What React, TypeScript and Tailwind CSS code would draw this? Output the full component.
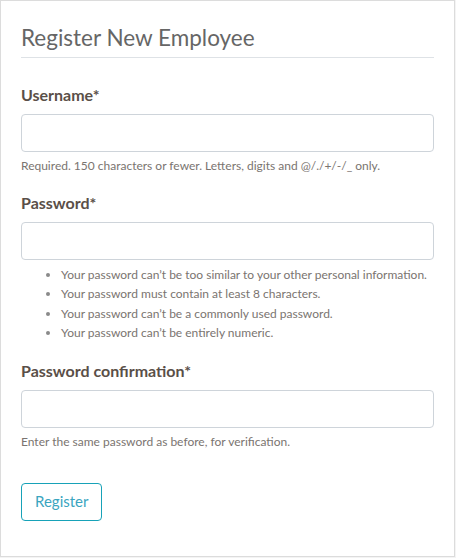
import React from "react";

const rules = [
  "Your password can\u2019t be too similar to your other personal information.",
  "Your password must contain at least 8 characters.",
  "Your password can\u2019t be a commonly used password.",
  "Your password can\u2019t be entirely numeric.",
];

function Field({ label, type, children }: { label: string; type: string; children?: React.ReactNode }) {
  return (
    <div className="mb-4">
      <label className="mb-[7px] block text-[16px] font-bold leading-6 text-[#5a4f48]">{label}</label>
      <input
        type={type}
        className="block h-[38px] w-full rounded-[4px] border border-[#ced4da] bg-white px-3 text-[16px] outline-none"
      />
      {children}
    </div>
  );
}

export default function App() {
  return (
    <div className="h-[558px] w-[456px] bg-[#f4f4f4]" style={{ fontFamily: "Lato, 'Noto Sans', sans-serif" }}>
      <div className="h-[557px] w-[455px] border border-[#dcdcdc] bg-white px-5 pt-[23px]">
        <h1 className="border-b border-[#dee2e6] pb-[5px] text-[22.5px] leading-7 font-normal text-[#666666]">
          Register New Employee
        </h1>
        <div className="mt-[25px]">
          <Field label="Username*" type="text">
            <p className="mt-[5px] text-[12px] leading-[18px] text-[#7a7470]">
              Required. 150 characters or fewer. Letters, digits and @/./+/-/_ only.
            </p>
          </Field>
          <Field label="Password*" type="password">
            <ul className="mt-[5px] list-disc pl-10 text-[12px] leading-[19.4px] whitespace-nowrap text-[#7a7470] marker:text-[#8a8a8a]">
              {rules.map((r) => (
                <li key={r}>{r}</li>
              ))}
            </ul>
          </Field>
          <Field label="Password confirmation*" type="password">
            <p className="mt-[5px] text-[12px] leading-[18px] text-[#7a7470]">
              Enter the same password as before, for verification.
            </p>
          </Field>
        </div>
        <button className="mt-4 h-[38px] rounded-[4px] border border-[#17a2b8] px-[13px] text-[15px] text-[#3aa5bf]">
          Register
        </button>
      </div>
    </div>
  );
}
